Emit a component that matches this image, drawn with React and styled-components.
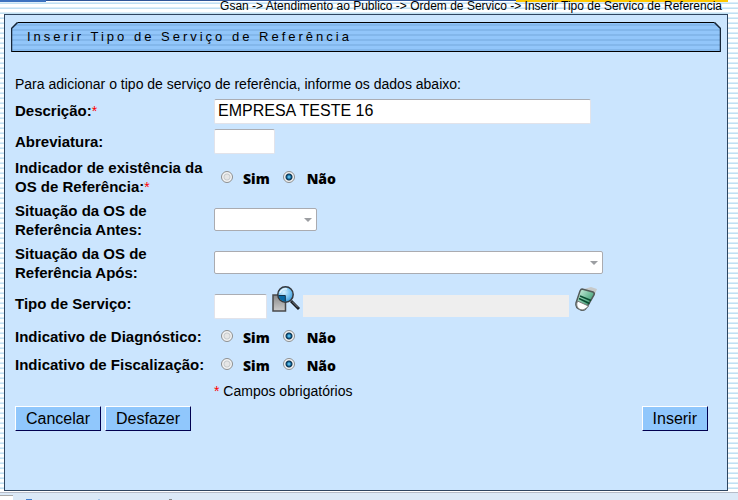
import React from "react";
import styled, { createGlobalStyle, css } from "styled-components";

const GlobalStyle = createGlobalStyle`
  *, *::before, *::after { box-sizing: border-box; }
  body {
    margin: 0;
    font: 14px/19px "Liberation Sans", Arial, sans-serif;
    color: #000;
    background: #fff;
  }
`;

const Page = styled.div`
  min-height: 100vh;
  display: flex;
  flex-direction: column;
  background: repeating-linear-gradient(
    to bottom,
    #fff 0 2px,
    #dcedf9 2px 3px,
    #c0e0f3 3px 4px,
    #fff 4px 5px
  );
`;

const TopStrip = styled.div`
  height: 2px;
  display: flex;
  background: #fff;
`;

const StripPart = styled.div`
  flex: ${(p) => p.$grow} 0 0;
  height: ${(p) => p.$h}px;
  background: ${(p) => p.$color};
`;

const Breadcrumb = styled.nav`
  height: 12px;
  padding-right: 16px;
  font-size: 12px;
  line-height: 9px;
  text-align: right;
  white-space: nowrap;
`;

const Panel = styled.main`
  flex: 1;
  display: flex;
  flex-direction: column;
  margin: 0 10px 1px 4px;
  padding: 7px 6px 16px;
  background: #cbe5fe;
  border: 1px solid #2f4560;
`;

const TitleBar = styled.header`
  position: relative;
  display: flex;
  height: 30px;
`;

const TitleFrame = styled.svg`
  position: absolute;
  inset: 0;
  width: 100%;
  height: 100%;
`;

const Title = styled.h1`
  position: relative;
  margin: 0;
  padding-left: 16px;
  font-size: 13px;
  line-height: 30px;
  font-weight: 400;
  letter-spacing: 3px;
`;

const Form = styled.form`
  margin: 23px 13px 0 4px;
`;

const Intro = styled.p`
  margin: 0 0 2px;
`;

const Row = styled.div`
  display: grid;
  grid-template-columns: 199px 1fr;
  align-items: center;
  min-height: ${(p) => p.$h}px;
`;

const labelText = css`
  font-size: 15px;
  font-weight: 700;
`;

const Label = styled.label`
  ${labelText}
`;

const LabelSpan = styled.span`
  ${labelText}
`;

const Line = styled.span`
  display: block;
`;

const Required = styled.span`
  color: #f00;
  font-size: 14px;
  font-weight: 400;
`;

const TextInput = styled.input`
  width: ${(p) => p.$w}px;
  height: 25px;
  padding: 0 3px;
  font: 16px "Liberation Sans", Arial, sans-serif;
  color: #000;
  background: #fff;
  border: 1px solid #e2e3ea;
  border-top-color: #abadb3;
  border-radius: 2px;
`;

const ReadOnlyInput = styled.input`
  width: 266px;
  height: 22px;
  margin: 0 5px 2px 3px;
  padding: 0 4px;
  background: #eee;
  border: 0;
`;

const SelectWrap = styled.div`
  display: grid;
  width: ${(p) => p.$w}px;
  align-items: center;
`;

const Select = styled.select`
  grid-area: 1 / 1;
  appearance: none;
  width: 100%;
  height: 23px;
  padding: 0 24px 0 4px;
  font: 14px "Liberation Sans", Arial, sans-serif;
  background: #fff;
  border: 1px solid #aaabb0;
  border-radius: 2px;
  opacity: 1;
`;

const Arrow = styled.svg`
  grid-area: 1 / 1;
  justify-self: end;
  margin-right: 5px;
  pointer-events: none;
`;

const Radios = styled.div`
  display: flex;
  padding: 4px 0 0 7px;
  gap: 13px;
`;

const RadioLabel = styled.label`
  display: flex;
  align-items: flex-start;
  gap: ${(p) => p.$gap}px;
  font: 800 14px/20px "Open Sans", "Arial Black", sans-serif;
`;

const Radio = styled.input`
  appearance: none;
  width: 12px;
  height: 12px;
  margin: 2px 0 0;
  border: 1px solid #8e8f8f;
  border-radius: 50%;
  background: radial-gradient(circle, #e6e6e6 0 2px, #c6cacc 3px, #f4f4f4 4px);

  &:checked {
    background: radial-gradient(circle, #59b9e5 0 1px, #0f5f92 2px, #10344f 3px, #f4f4f4 4px);
  }
`;

const Lookup = styled.div`
  display: flex;
  align-items: flex-end;
  align-self: end;
  padding-bottom: 3px;
`;

const IconButton = styled.button`
  display: block;
  height: 28px;
  margin: 0 0 5px ${(p) => p.$left}px;
  padding: 0;
  border: 0;
  background: none;
`;

const Note = styled.p`
  margin: 0;
  grid-column: 2;
`;

const Actions = styled.div`
  display: flex;
  gap: 4px;
  margin-top: 2px;
`;

const Button = styled.button`
  height: 25px;
  padding: 0 10px;
  font: 16px "Liberation Sans", Arial, sans-serif;
  color: #000;
  background: #90c7fc;
  border: 1px solid;
  border-color: #fff #000050 #000050 #fff;
  margin-left: ${(p) => (p.$end ? "auto" : "0")};
`;

const StatusBar = styled.footer`
  display: flex;
  height: 8px;
  background: #dbe9f7;
  border-top: 1px solid #b6bcc8;
`;

function TitleBackground() {
  return (
    <TitleFrame aria-hidden="true">
      <defs>
        <pattern id="lines" width="24" height="5" patternUnits="userSpaceOnUse">
          <rect width="24" height="5" fill="#92c6fa" />
          <rect y="2" width="24" height="2" fill="#83b7eb" />
        </pattern>
      </defs>
      <rect x="0" y="0" width="100%" height="100%" fill="url(#lines)" />
      <path d="M0 29.5H4000M6 .5H4000" stroke="#000" strokeWidth="1" />
      <path d="M0 0H7L0 7Z" fill="#cbe5fe" />
      <path d="M.5 30V6.500L6.500.5" fill="none" stroke="#172638" strokeWidth="1.500" />
      <svg x="100%" overflow="visible">
        <path d="M0 0H-7L0 7Z" fill="#cbe5fe" />
        <path d="M-6.500.5L-.5 6.500V30" fill="none" stroke="#172638" strokeWidth="1.500" />
      </svg>
    </TitleFrame>
  );
}

function SearchIcon() {
  return (
    <svg width="28" height="28" viewBox="0 0 28 28" aria-hidden="true">
      <defs>
        <linearGradient id="paper" x1="0" y1="0" x2="0" y2="1">
          <stop offset="0" stopColor="#888" />
          <stop offset="1" stopColor="#ccc" />
        </linearGradient>
        <radialGradient id="lens" cx=".4" cy=".35" r=".65">
          <stop offset="0" stopColor="#d4f0ff" />
          <stop offset=".6" stopColor="#79c4f2" />
          <stop offset="1" stopColor="#3f9bd8" />
        </radialGradient>
      </defs>
      <rect x="1" y="9" width="12.500" height="16" fill="url(#paper)" stroke="#49494b" strokeWidth="1.500" />
      <path d="M19 15L27 23" stroke="#17191c" strokeWidth="3" />
      <path d="M20 15.500L26 21.500" stroke="#828890" strokeWidth="1" />
      <circle cx="13.500" cy="8.500" r="7.700" fill="url(#lens)" stroke="#35383d" strokeWidth="1.500" />
      <path d="M6.500 9.500H13.300V15.500A7 7 0 0 1 6.500 9.500Z" fill="#0769a5" />
      <path d="M6.500 9.500H13.300V15.500" fill="none" stroke="#12324a" />
      <path d="M8 7A6 6 0 0 1 15 3" fill="none" stroke="#fff" strokeWidth="1.500" opacity=".7" />
    </svg>
  );
}

function EraserIcon() {
  return (
    <svg width="24" height="28" viewBox="0 0 24 28" aria-hidden="true">
      <defs>
        <linearGradient id="rubber" x1="0" y1="0" x2="1" y2="1">
          <stop offset="0" stopColor="#e4f7ec" />
          <stop offset=".5" stopColor="#6fbd9a" />
          <stop offset="1" stopColor="#127046" />
        </linearGradient>
      </defs>
      <path d="M10 3L17 1L23 3L21 8L18 12Z" fill="#c6c9c9" />
      <path d="M8 3L19 6Q21 7 20 9L13 21Q11 25 7 24Q1 22 2 17L6 5Q7 3 8 3Z" fill="url(#rubber)" stroke="#525a58" strokeWidth="1.500" />
      <path d="M3.500 15L14.500 20L12 22.500Q9 25 6 23.500Q1 21 3.500 15Z" fill="#fff" stroke="#777" />
      <path d="M6 10L17 14.500M5 12.500L15.500 17.500" stroke="#0a4d31" strokeWidth="1.500" />
    </svg>
  );
}

function DropDown({ id, width }) {
  return (
    <SelectWrap $w={width}>
      <Select id={id} disabled>
        <option></option>
      </Select>
      <Arrow width="8" height="4" viewBox="0 0 8 4" aria-hidden="true">
        <path d="M0 0H8L4 4Z" fill="#9c9ea2" />
      </Arrow>
    </SelectWrap>
  );
}

function YesNo({ name, labelledBy }) {
  return (
    <Radios role="radiogroup" aria-labelledby={labelledBy}>
      <RadioLabel $gap={10}>
        <Radio type="radio" name={name} value="1" />
        Sim
      </RadioLabel>
      <RadioLabel $gap={12}>
        <Radio type="radio" name={name} value="2" defaultChecked />
        Não
      </RadioLabel>
    </Radios>
  );
}

export default function App() {
  return (
    <>
      <GlobalStyle />
      <Page>
        <TopStrip>
          <StripPart $grow={46} $h={2} $color="#3d72c0" />
          <StripPart $grow={470} $h={1} $color="#2f5597" />
          <StripPart $grow={212} $h={2} $color="#ffc800" />
          <StripPart $grow={10} $h={2} $color="#fff" />
        </TopStrip>
        <Breadcrumb aria-label="Caminho">
          Gsan -&gt; Atendimento ao Publico -&gt; Ordem de Servico -&gt; Inserir Tipo de Servico de Referencia
        </Breadcrumb>
        <Panel>
          <TitleBar>
            <TitleBackground />
            <Title>Inserir Tipo de Serviço de Referência</Title>
          </TitleBar>
          <Form onSubmit={(e) => e.preventDefault()}>
            <Intro>Para adicionar o tipo de serviço de referência, informe os dados abaixo:</Intro>
            <Row $h={30}>
              <Label htmlFor="descricao">
                Descrição:<Required>*</Required>
              </Label>
              <TextInput id="descricao" $w={377} defaultValue="EMPRESA TESTE 16" />
            </Row>
            <Row $h={30}>
              <Label htmlFor="abreviatura">Abreviatura:</Label>
              <TextInput id="abreviatura" $w={61} />
            </Row>
            <Row $h={42}>
              <LabelSpan id="existencia">
                <Line>Indicador de existência da</Line>
                <Line>
                  OS de Referência:<Required>*</Required>
                </Line>
              </LabelSpan>
              <YesNo name="existencia" labelledBy="existencia" />
            </Row>
            <Row $h={43}>
              <Label htmlFor="antes">
                <Line>Situação da OS de</Line>
                <Line>Referência Antes:</Line>
              </Label>
              <DropDown id="antes" width={103} />
            </Row>
            <Row $h={43}>
              <Label htmlFor="apos">
                <Line>Situação da OS de</Line>
                <Line>Referência Após:</Line>
              </Label>
              <DropDown id="apos" width={389} />
            </Row>
            <Row $h={38}>
              <Label htmlFor="tipo">Tipo de Serviço:</Label>
              <Lookup>
                <TextInput id="tipo" $w={53} />
                <IconButton $left={5} type="button" aria-label="Pesquisar">
                  <SearchIcon />
                </IconButton>
                <ReadOnlyInput readOnly aria-label="Descrição do tipo de serviço" />
                <IconButton $left={0} type="button" aria-label="Limpar">
                  <EraserIcon />
                </IconButton>
              </Lookup>
            </Row>
            <Row $h={28}>
              <LabelSpan id="diagnostico">Indicativo de Diagnóstico:</LabelSpan>
              <YesNo name="diagnostico" labelledBy="diagnostico" />
            </Row>
            <Row $h={28}>
              <LabelSpan id="fiscalizacao">Indicativo de Fiscalização:</LabelSpan>
              <YesNo name="fiscalizacao" labelledBy="fiscalizacao" />
            </Row>
            <Row $h={26}>
              <Note>
                <Required>*</Required> Campos obrigatórios
              </Note>
            </Row>
            <Actions>
              <Button type="button">Cancelar</Button>
              <Button type="reset">Desfazer</Button>
              <Button type="submit" $end>Inserir</Button>
            </Actions>
          </Form>
        </Panel>
        <StatusBar>
          <svg width="180" height="7" viewBox="0 0 180 7" aria-hidden="true">
            <path d="M0 2H13V7H0Z" fill="#fff" />
            <path d="M0 2.500H13" stroke="#aaa" />
            <path d="M26 6H32V7H26Z" fill="#3f7fd0" />
            <path d="M98 6H100V7H98Z" fill="#9fc3ea" />
            <path d="M169 6H172V7H169Z" fill="#888" />
          </svg>
        </StatusBar>
      </Page>
    </>
  );
}
